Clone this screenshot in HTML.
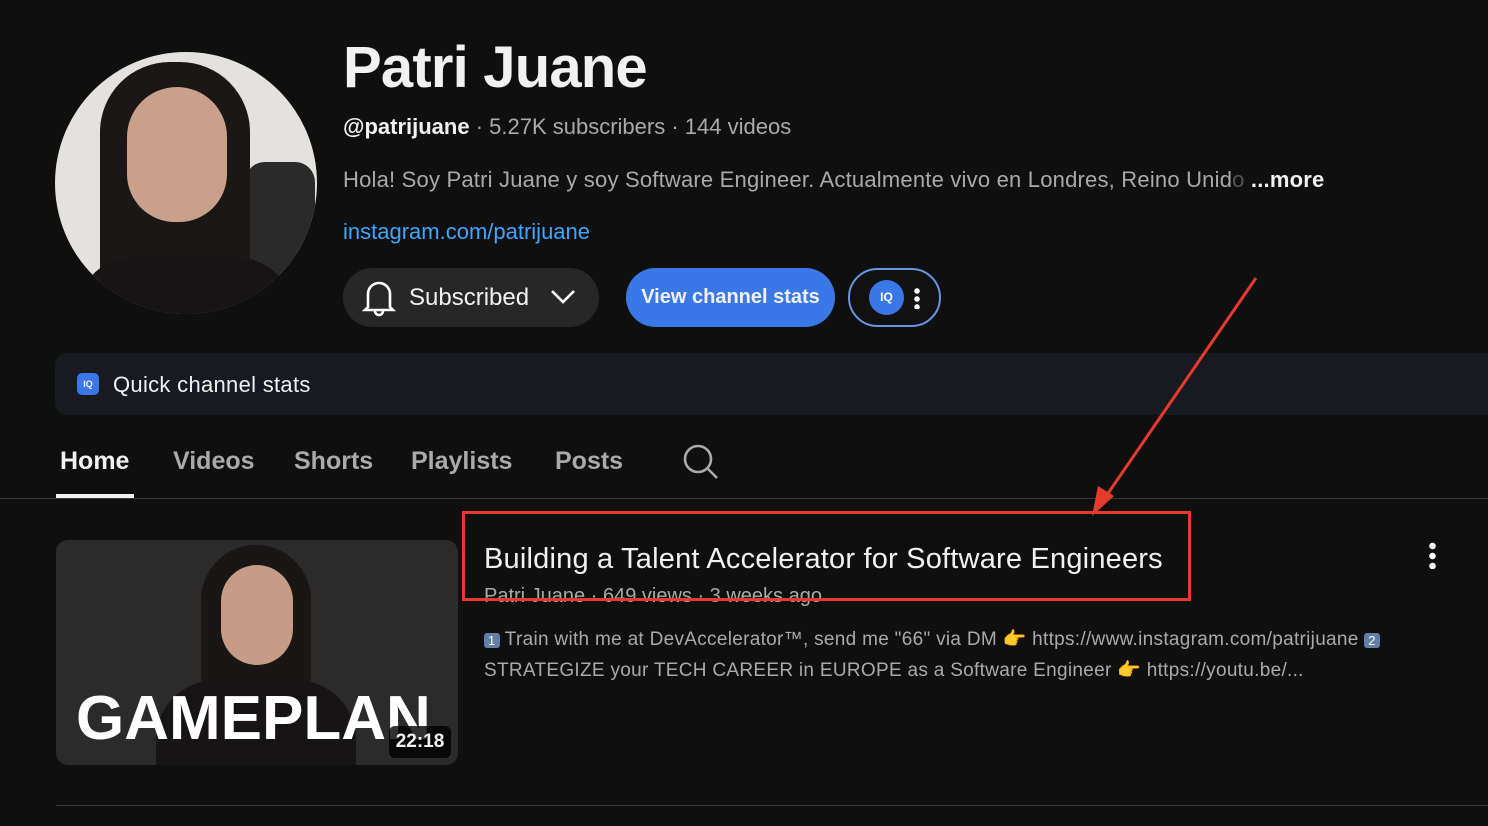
<!DOCTYPE html>
<html><head><meta charset="utf-8"><style>
*{margin:0;padding:0;box-sizing:border-box}
body{width:1488px;height:826px;background:#0f0f0f;color:#f1f1f1;font-family:"Liberation Sans",sans-serif;position:relative;overflow:hidden}
.a{position:absolute}
</style></head><body>
<div class="a" style="left:55px;top:52px;width:262px;height:262px;border-radius:50%;overflow:hidden;background:#e4e2df">
 <div class="a" style="left:190px;top:110px;width:70px;height:160px;background:#2a2a2a;border-radius:20px"></div>
 <div class="a" style="left:45px;top:10px;width:150px;height:270px;background:#1b1716;border-radius:70px 70px 20px 20px"></div>
 <div class="a" style="left:72px;top:35px;width:100px;height:135px;background:#c9a08a;border-radius:50px 50px 48px 48px"></div>
 <div class="a" style="left:20px;top:205px;width:220px;height:80px;background:#161414;border-radius:60px 60px 0 0"></div>
</div>
<div class="a" style="left:343px;top:34px;font-size:58px;font-weight:bold;letter-spacing:-0.8px">Patri Juane</div>
<div class="a" style="left:343px;top:114px;font-size:22px;color:#aaa"><b style="color:#f1f1f1;font-weight:bold">@patrijuane</b> · 5.27K subscribers · 144 videos</div>
<div class="a" style="left:343px;top:167px;font-size:22px;color:#aaa;white-space:nowrap;letter-spacing:0.2px">Hola! Soy Patri Juane y soy Software Engineer. Actualmente vivo en Londres, Reino Unid<span style="color:#555">o</span> <b style="color:#f1f1f1">...more</b></div>
<div class="a" style="left:343px;top:219px;font-size:22px;color:#3ea6ff">instagram.com/patrijuane</div>
<div class="a" style="left:343px;top:268px;width:256px;height:59px;border-radius:30px;background:#272727"></div>
<svg class="a" style="left:362px;top:278px" width="34" height="40" viewBox="0 0 34 40"><path d="M6 29V16a11 11 0 0 1 22 0v13l3 3H3z M13 33a4 4 0 0 0 8 0" fill="none" stroke="#fff" stroke-width="2.6"/></svg>
<div class="a" style="left:409px;top:284px;font-size:24px">Subscribed</div>
<svg class="a" style="left:550px;top:288px" width="26" height="18"><path d="M2 3l11 11 11-11" fill="none" stroke="#fff" stroke-width="2.6"/></svg>
<div class="a" style="left:626px;top:268px;width:209px;height:59px;border-radius:30px;background:#3b78e7;font-size:20px;font-weight:bold;text-align:center;line-height:59px">View channel stats</div>
<div class="a" style="left:848px;top:268px;width:93px;height:59px;border-radius:30px;border:2px solid #6a95e0;background:#111"></div>
<div class="a" style="left:869px;top:280px;width:35px;height:35px;border-radius:50%;background:#3b78e7;font-size:12px;font-weight:bold;text-align:center;line-height:35px;color:#fff">IQ</div>
<div class="a" style="left:914px;top:287px;width:6px;height:22px;background:radial-gradient(circle,#fff 2.5px,transparent 3px) 0 0/6px 8px"></div>
<div class="a" style="left:55px;top:353px;width:1440px;height:62px;border-radius:12px;background:#181a22"></div>
<div class="a" style="left:77px;top:373px;width:22px;height:22px;border-radius:5px;background:#3b78e7;font-size:9px;font-weight:bold;text-align:center;line-height:22px">IQ</div>
<div class="a" style="left:113px;top:372px;font-size:22px;letter-spacing:0.3px">Quick channel stats</div>
<div class="a" style="left:60px;top:447px;font-size:25px;font-weight:bold">Home</div>
<div class="a" style="left:56px;top:494px;width:78px;height:4px;background:#f1f1f1"></div>
<div class="a" style="left:173px;top:447px;font-size:25px;color:#aaa;font-weight:bold">Videos</div>
<div class="a" style="left:294px;top:447px;font-size:25px;color:#aaa;font-weight:bold">Shorts</div>
<div class="a" style="left:411px;top:447px;font-size:25px;color:#aaa;font-weight:bold">Playlists</div>
<div class="a" style="left:555px;top:447px;font-size:25px;color:#aaa;font-weight:bold">Posts</div>
<svg class="a" style="left:681px;top:442px" width="40" height="40"><circle cx="17" cy="17" r="13" fill="none" stroke="#aaa" stroke-width="2.6"/><path d="M27 27l9 9" stroke="#aaa" stroke-width="2.6"/></svg>
<div class="a" style="left:0;top:498px;width:1488px;height:1px;background:#3a3a3a"></div>
<div class="a" style="left:56px;top:540px;width:402px;height:225px;border-radius:12px;overflow:hidden;background:#2b2b2b">
 <div class="a" style="left:145px;top:5px;width:110px;height:200px;background:#1a1615;border-radius:55px 55px 10px 10px"></div>
 <div class="a" style="left:165px;top:25px;width:72px;height:100px;background:#c79c87;border-radius:36px"></div>
 <div class="a" style="left:100px;top:140px;width:200px;height:90px;background:#161414;border-radius:60px 60px 0 0"></div>
 <div class="a" style="left:20px;top:143px;font-size:62px;font-weight:bold;color:#fff;letter-spacing:0px">GAMEPLAN</div>
 <div class="a" style="left:333px;top:186px;width:62px;height:32px;border-radius:6px;background:rgba(0,0,0,.8);font-size:19px;font-weight:bold;text-align:center;line-height:32px">22:18</div>
</div>
<div class="a" style="left:484px;top:543px;font-size:29px;letter-spacing:0.2px">Building a Talent Accelerator for Software Engineers</div>
<div class="a" style="left:484px;top:585px;font-size:20px;color:#aaa">Patri Juane · 649 views · 3 weeks ago</div>
<div class="a" style="left:484px;top:625px;font-size:19px;color:#aaa;line-height:30px;width:920px;letter-spacing:0.3px"><span style="background:#5f7fa8;color:#fff;font-size:13px;padding:0 4px;border-radius:3px">1</span> Train with me at DevAccelerator™, send me "66" via DM 👉 https://www.instagram.com/patrijuane <span style="background:#5f7fa8;color:#fff;font-size:13px;padding:0 4px;border-radius:3px">2</span><br>STRATEGIZE your TECH CAREER in EUROPE as a Software Engineer 👉 https://youtu.be/...</div>
<div class="a" style="left:1429px;top:541px;width:7px;height:28px;background:radial-gradient(circle,#fff 3px,transparent 3.5px) 0 0/7px 10px"></div>
<div class="a" style="left:462px;top:511px;width:729px;height:90px;border:3px solid #e53b2c"></div>
<svg class="a" style="left:0;top:0" width="1488" height="826"><path d="M1256 278L1100 505" stroke="#e53b2c" stroke-width="3"/><path d="M1092 516l6-30 16 10z" fill="#e53b2c"/></svg>
<div class="a" style="left:56px;top:805px;width:1440px;height:1px;background:#3a3a3a"></div>
</body></html>
